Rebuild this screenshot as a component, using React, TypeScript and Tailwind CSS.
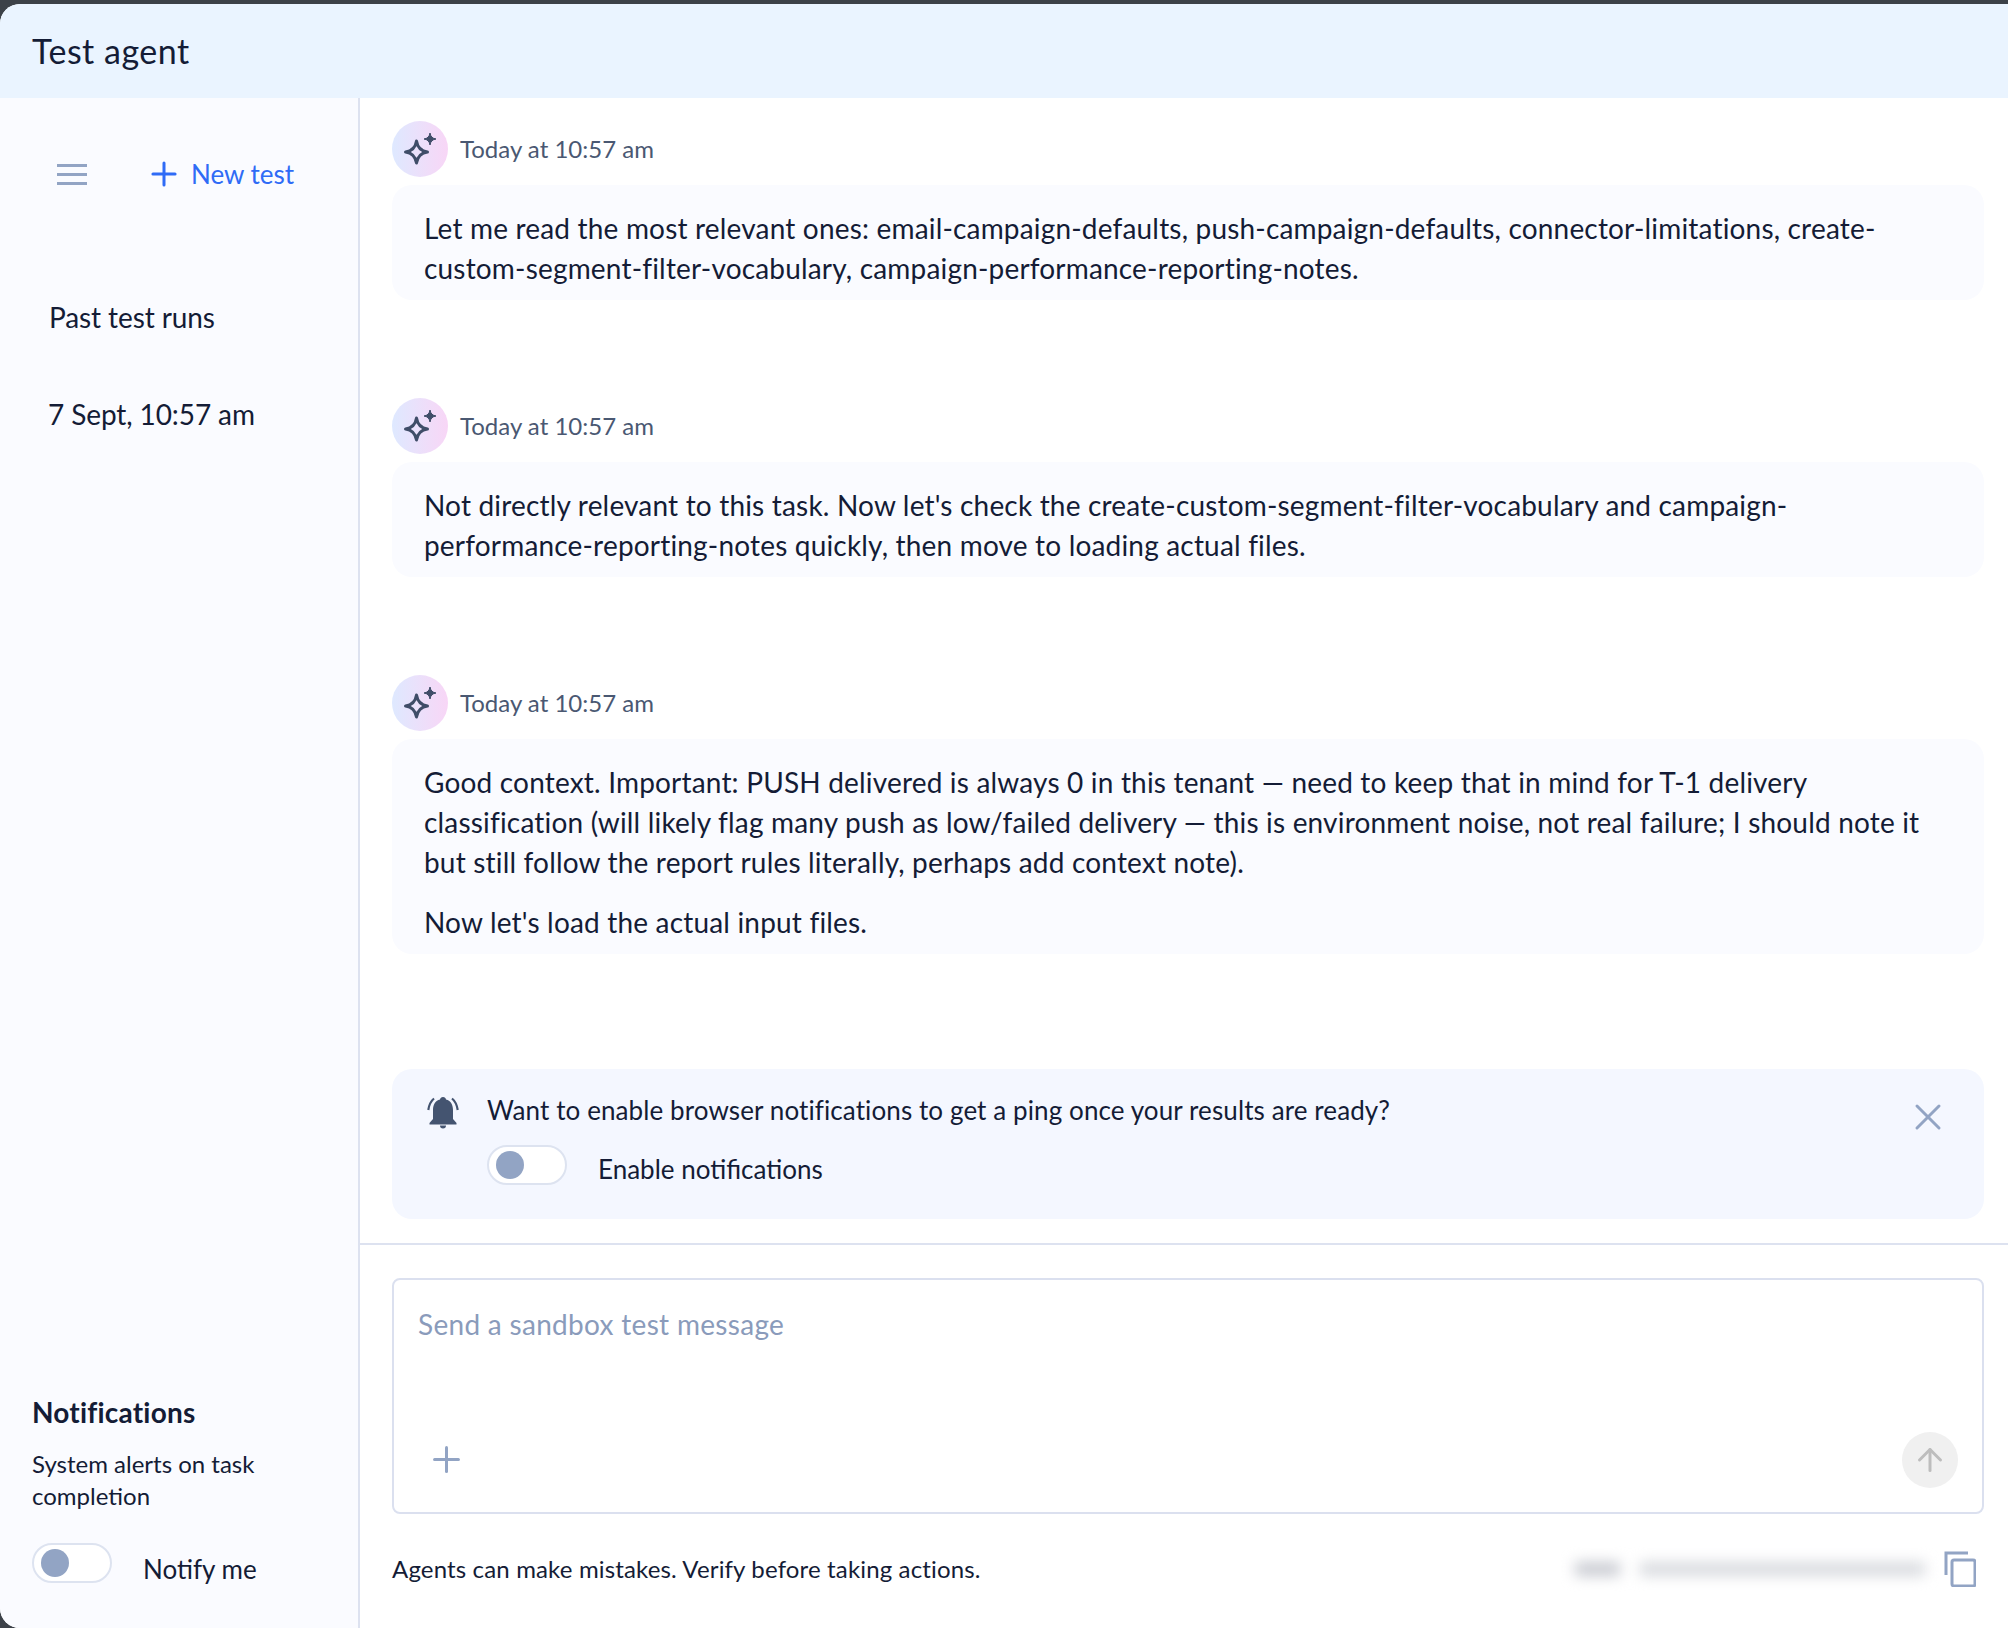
import { Plus, X, ArrowUp } from "lucide-react";

const messages = [
  {
    paragraphs: [
      "Let me read the most relevant ones: email-campaign-defaults, push-campaign-defaults, connector-limitations, create-custom-segment-filter-vocabulary, campaign-performance-reporting-notes.",
    ],
  },
  {
    paragraphs: [
      "Not directly relevant to this task. Now let's check the create-custom-segment-filter-vocabulary and campaign-performance-reporting-notes quickly, then move to loading actual files.",
    ],
  },
  {
    paragraphs: [
      "Good context. Important: PUSH delivered is always 0 in this tenant — need to keep that in mind for T-1 delivery classification (will likely flag many push as low/failed delivery — this is environment noise, not real failure; I should note it but still follow the report rules literally, perhaps add context note).",
      "Now let's load the actual input files.",
    ],
  },
];

function AgentAvatar() {
  return (
    <div className="w-14 h-14 rounded-full bg-gradient-to-r from-[#DEE9FF] to-[#F8D6F6] shrink-0">
      <svg width="56" height="56" viewBox="0 0 56 56" fill="none">
        <path
          d="M24.5 20C25.5 26.5 28.5 30 35.5 31C28.5 32 25.5 35.5 24.5 42C23.5 35.5 20.5 32 13.5 31C20.5 30 23.5 26.5 24.5 20Z"
          stroke="#3F4D68"
          strokeWidth="3"
          strokeLinejoin="round"
        />
        <path d="M38 12C38.6 15.6 40.4 17.4 44 18C40.4 18.6 38.6 20.4 38 24C37.4 20.4 35.6 18.6 32 18C35.6 17.4 37.4 15.6 38 12Z" fill="#3F4D68" stroke="#3F4D68" strokeLinejoin="round" />
      </svg>
    </div>
  );
}

function Toggle() {
  return (
    <div className="w-20 h-10 rounded-full border-2 border-[#DDE3F0] bg-white flex items-center pl-[7px] shrink-0">
      <div className="w-7 h-7 rounded-full bg-[#92A4C4]" />
    </div>
  );
}

function Message({ paragraphs }: { paragraphs: string[] }) {
  return (
    <div>
      <div className="flex items-center gap-3">
        <AgentAvatar />
        <span className="text-[24px] text-[#4A5872]">Today at 10:57 am</span>
      </div>
      <div className="mt-2 bg-[#FAFBFF] rounded-[20px] pl-8 pr-8 pt-[23px] pb-[12px] text-[28px] leading-10 tracking-[0.18px] flex flex-col gap-5">
        {paragraphs.map((p) => (
          <p key={p}>{p}</p>
        ))}
      </div>
    </div>
  );
}

export default function App() {
  return (
    <div className="w-[2008px] h-[1628px] bg-[#3C4148] pt-[4px] overflow-hidden font-['Lato',sans-serif] text-[#141C36]">
      <div className="h-full flex flex-col rounded-tl-[20px] rounded-bl-[20px] overflow-hidden bg-white">
        <header className="h-[94px] shrink-0 bg-[#EAF4FF] flex items-center pl-8 pb-[2px] text-[34px] tracking-[0.5px]">Test agent</header>

        <div className="flex flex-1 min-h-0">
          <aside className="w-[360px] shrink-0 bg-[#FAFBFF] border-r-2 border-[#DDE2F0] flex flex-col">
            <div className="flex items-center pl-[57px] pt-[56px] h-[96px]">
              <svg width="30" height="21" viewBox="0 0 30 21" fill="#92A4C4" className="shrink-0">
                <rect y="0" width="30" height="3" />
                <rect y="9" width="30" height="3" />
                <rect y="18" width="30" height="3" />
              </svg>
              <div className="flex items-center ml-[66px] text-[#2F6BF6] text-[26px]">
                <Plus size={38} strokeWidth={3} absoluteStrokeWidth className="-mx-2" />
                <span className="ml-[16px]">New test</span>
              </div>
            </div>
            <div className="pl-[49px] mt-[103px] text-[28px] leading-10 tracking-[-0.1px]">Past test runs</div>
            <div className="pl-[48px] mt-[57px] text-[28px] leading-10 tracking-[-0.1px]">7 Sept, 10:57 am</div>

            <div className="mt-auto px-8 pb-[45px]">
              <div className="text-[28px] leading-9 font-bold tracking-[0.2px]">Notifications</div>
              <div className="mt-[18px] text-[24px] leading-8">System alerts on task completion</div>
              <div className="mt-[31px] h-10 flex items-center gap-[31px]">
                <Toggle />
                <span className="text-[26px] leading-none pt-[11px]">Notify me</span>
              </div>
            </div>
          </aside>

          <main className="flex-1 min-w-0 flex flex-col">
            <div className="flex-1 min-h-0 pl-8 pr-6 pt-[23px] flex flex-col">
              <div className="flex flex-col gap-[98px]">
                {messages.map((m, i) => (
                  <Message key={i} paragraphs={m.paragraphs} />
                ))}
              </div>
              <div className="mt-auto mb-6 h-[150px] bg-[#F4F7FF] rounded-[20px] pl-8 pr-8 pt-[25px] flex gap-[28px] relative">
                <svg width="32" height="32" viewBox="0 0 32 32" className="shrink-0 ml-[3px] mt-[3px]" fill="#445470">
                  <path d="M16 0C18 0 19 1.500 19 2.500C23.500 3.500 26 7.500 26 13V22L29.500 26V27.500H2.500V26L6 22V13C6 7.500 8.500 3.500 13 2.500C13 1.500 14 0 16 0Z" />
                  <path d="M13 28.500H19C19 30.500 18 31.500 16 31.500S13 30.500 13 28.500Z" />
                  <path d="M7 1.500C4 4 2 8 1.300 13M25 1.500C28 4 30 8 30.700 13" stroke="#445470" strokeWidth="2.200" fill="none" />
                </svg>
                <div>
                  <div className="text-[26px] leading-8 tracking-[0.1px]">Want to enable browser notifications to get a ping once your results are ready?</div>
                  <div className="mt-[19px] h-10 flex items-center gap-[31px]">
                    <Toggle />
                    <span className="text-[26px] leading-none pt-[8px]">Enable notifications</span>
                  </div>
                </div>
                <X size={44} color="#92A4C4" strokeWidth={3} absoluteStrokeWidth className="absolute right-[34px] top-[26px]" />
              </div>
            </div>

            <div className="h-[385px] shrink-0 border-t-2 border-[#DDE2F0] pl-8 pr-6 pt-[33px]">
              <div className="h-[236px] border-2 border-[#DBE0EF] rounded-[8px] relative pl-6 pt-[23px]">
                <div className="text-[28px] tracking-[0.3px] text-[#8A9BBB]">Send a sandbox test message</div>
                <Plus size={41} color="#92A4C4" strokeWidth={3} absoluteStrokeWidth className="absolute left-[32px] bottom-[32px]" />
                <div className="absolute right-6 bottom-6 w-14 h-14 rounded-full bg-[#F0F0F0] flex items-center justify-center">
                  <ArrowUp size={36} color="#BDBDBD" strokeWidth={3} absoluteStrokeWidth />
                </div>
              </div>
              <div className="mt-[37px] flex items-center">
                <span className="text-[24px] tracking-[0.15px]">Agents can make mistakes. Verify before taking actions.</span>
                <div className="ml-auto flex items-center gap-5 blur-[7px]">
                  <div className="w-[45px] h-[14px] bg-[#C8CAD1]" />
                  <div className="w-[285px] h-[14px] bg-[#D8DADF]" />
                </div>
                <svg width="32" height="36" viewBox="0 0 32 36" fill="none" stroke="#92A4C4" strokeWidth="3" className="ml-[19px] mr-2 shrink-0">
                  <path d="M2 24V2h22" />
                  <rect x="8" y="9" width="23" height="26" rx="2" />
                </svg>
              </div>
            </div>
          </main>
        </div>
      </div>
    </div>
  );
}
